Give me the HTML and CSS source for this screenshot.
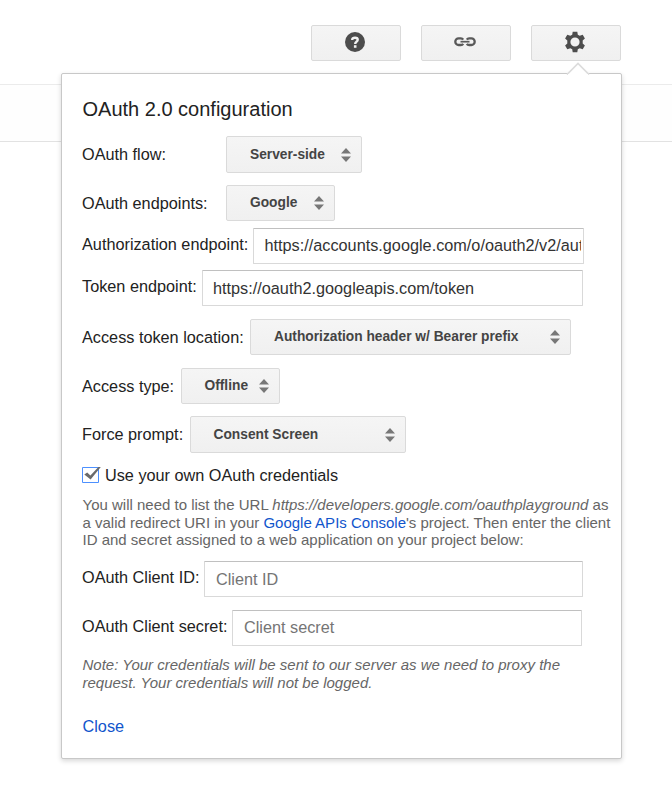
FILE: index.html
```html
<!DOCTYPE html>
<html lang="en">
<head>
<meta charset="utf-8">
<title>OAuth 2.0 configuration</title>
<link rel="stylesheet" href="styles.css">
</head>
<body>
<header class="toolbar">
  <button class="tool" aria-label="Help">
    <svg width="22" height="22" viewBox="0 0 22 22"><circle cx="11" cy="11" r="10" fill="#4d4d4d"/><path d="M8.2 8.9C8.2 7.4 9.2 6.7 11 6.7s2.7.8 2.7 2c0 1.8-2.5 2-2.5 4.3" fill="none" stroke="#f3f3f3" stroke-width="2.4"/><path d="M9.9 14.2h2.6v2.6H9.9z" fill="#f3f3f3"/></svg>
  </button>
  <button class="tool" aria-label="Link">
    <svg width="24" height="22" viewBox="0 0 24 22" fill="none" stroke="#5a5a5a" stroke-width="2.3"><path d="M10.2 8.6C9.6 7.7 8.8 7.4 7.9 7.4H5.6a3.3 3.3 0 0 0 0 6.6h2.3c.9 0 1.7-.3 2.3-1.2M13.8 8.6c.6-.9 1.4-1.2 2.3-1.2h2.3a3.3 3.3 0 0 1 0 6.6h-2.3c-.9 0-1.7-.3-2.3-1.2"/><path d="M7.5 10.7h9" stroke-width="1.7"/></svg>
  </button>
  <button class="tool" aria-label="Settings">
    <svg width="22" height="22" viewBox="0 0 22 22"><path fill="#4d4d4d" fill-rule="evenodd" d="M8.7.7h4.6l.5 3 1.9 1.1 3-1.1 2.2 3.9-2.2 2v2.8l2.2 2-2.2 3.9-3-1.1-1.9 1.1-.5 3H8.7l-.5-3-1.9-1.1-3 1.1-2.2-3.9 2.2-2V9.6l-2.2-2 2.2-3.9 3 1.1 1.9-1.1zM11 6.4a4.6 4.6 0 1 0 0 9.2 4.6 4.6 0 0 0 0-9.2z"/></svg>
  </button>
</header>
<div class="band"></div>

<section class="popup">
  <svg class="arrow" width="24" height="13" viewBox="0 0 24 13"><path d="M1 12.5 12 1.5l11 11" fill="#fff" stroke="#dcdcdc" stroke-width="1.7"/><path d="M2 12.5h20" stroke="#fff"/></svg>
  <h1 class="title">OAuth 2.0 configuration</h1>

  <div class="row row-flow">
    <span class="label label-wide">OAuth flow:</span>
    <button class="select select-flow"><span>Server-side</span><svg class="sort" width="10" height="14"><path d="M0 5.5 5 0l5 5.5zM0 8.5h10L5 14z"/></svg></button>
  </div>
  <div class="row row-endpoints">
    <span class="label label-wide">OAuth endpoints:</span>
    <button class="select select-google"><span>Google</span><svg class="sort" width="10" height="14"><path d="M0 5.5 5 0l5 5.5zM0 8.5h10L5 14z"/></svg></button>
  </div>
  <div class="row row-auth">
    <label class="label label-auth" for="auth">Authorization endpoint:</label>
    <input class="field field-auth" id="auth" value="https://accounts.google.com/o/oauth2/v2/auth">
  </div>
  <div class="row row-token">
    <label class="label label-token" for="token">Token endpoint:</label>
    <input class="field field-token" id="token" value="https://oauth2.googleapis.com/token">
  </div>
  <div class="row row-location">
    <span class="label label-location">Access token location:</span>
    <button class="select select-location"><span>Authorization header w/ Bearer prefix</span><svg class="sort" width="10" height="14"><path d="M0 5.5 5 0l5 5.5zM0 8.5h10L5 14z"/></svg></button>
  </div>
  <div class="row row-type">
    <span class="label label-type">Access type:</span>
    <button class="select select-type"><span>Offline</span><svg class="sort" width="10" height="14"><path d="M0 5.5 5 0l5 5.5zM0 8.5h10L5 14z"/></svg></button>
  </div>
  <div class="row row-prompt">
    <span class="label label-prompt">Force prompt:</span>
    <button class="select select-prompt"><span>Consent Screen</span><svg class="sort" width="10" height="14"><path d="M0 5.5 5 0l5 5.5zM0 8.5h10L5 14z"/></svg></button>
  </div>
  <div class="own">
    <svg class="check" width="20" height="19" viewBox="0 0 20 19"><path d="M.5 2.5h16v15H.5z" fill="#fff" stroke="#4d90fe"/><path d="M2.3 9.6 5.2 7.6l3.2 3L16.4 2h2.4L8.6 14.6z" fill="#6a6a6a"/></svg>
    <span>Use your own OAuth credentials</span>
  </div>
  <p class="help">You will need to list the URL <i>https://developers.google.com/oauthplayground</i> as<br>a valid redirect URI in your <a href="#">Google APIs Console</a>'s project. Then enter the client<br>ID and secret assigned to a web application on your project below:</p>
  <div class="row row-id">
    <label class="label label-id" for="cid">OAuth Client ID:</label>
    <input class="field field-id" id="cid" placeholder="Client ID">
  </div>
  <div class="row row-secret">
    <label class="label label-secret" for="secret">OAuth Client secret:</label>
    <input class="field field-secret" id="secret" placeholder="Client secret">
  </div>
  <p class="note">Note: Your credentials will be sent to our server as we need to proxy the<br>request. Your credentials will not be logged.</p>
  <a class="close" href="#">Close</a>
</section>
</body>
</html>
```
FILE: styles.css
```css
* { box-sizing: border-box; }
body {
  margin: 0;
  height: 797px;
  overflow: hidden;
  position: relative;
  background: #fff;
  color: #222;
  font-family: "Liberation Sans", Arial, sans-serif;
  font-size: 16.25px;
  line-height: 20px;
}
button, input { font-family: inherit; margin: 0; }
a { color: #15c; text-decoration: none; }

.toolbar {
  display: flex;
  justify-content: flex-end;
  gap: 20px;
  height: 84px;
  padding: 25px 51px 0 0;
}
.tool {
  display: flex;
  align-items: center;
  justify-content: center;
  width: 90px;
  height: 36px;
  padding: 0 2px 2px 0;
  border: 1px solid #dadada;
  border-radius: 2px;
  background: linear-gradient(#f5f5f5, #f0f0f0);
}
.band {
  height: 58px;
  border-top: 1px solid #ebebeb;
  border-bottom: 1px solid #e2e2e2;
  background: #fefefe;
}

.popup {
  position: absolute;
  top: 73px;
  left: 61px;
  width: 561px;
  height: 686px;
  padding: 23px 0 0 20px;
  border: 1px solid #c8c8c8;
  border-radius: 2px;
  background: #fff;
  box-shadow: 0 2px 5px rgba(0, 0, 0, .16);
}
.arrow {
  position: absolute;
  top: -12px;
  left: 504px;
}
.title {
  height: 39px;
  margin: 0;
  padding-left: .5px;
  font-size: 20px;
  font-weight: normal;
  line-height: 24px;
}

.row { display: flex; align-items: flex-start; }
.row-flow { height: 49px; }
.row-endpoints { height: 43px; }
.row-auth { height: 42px; }
.row-token { height: 49px; }
.row-location { height: 49px; }
.row-type { height: 48px; }
.row-prompt { height: 49px; }
.row-id { height: 49px; }
.row-secret { height: 46px; }

.label { flex: none; padding-top: 8px; white-space: nowrap; }
.label-wide { width: 144px; }
.label-auth { width: 171px; }
.label-token { width: 120px; }
.label-location { width: 168px; }
.label-type { width: 99px; }
.label-prompt { width: 108px; }
.label-id { width: 122px; }
.label-secret { width: 150px; }
.label-auth, .label-token, .label-id, .label-secret { padding-top: 6px; }

.select {
  display: flex;
  align-items: center;
  justify-content: space-between;
  height: 36px;
  padding: 0 10px 0 23px;
  border: 1px solid #dadada;
  border-radius: 2px;
  background: linear-gradient(#f5f5f5, #f0f0f0);
  color: #444;
  font-size: 13.75px;
  font-weight: bold;
  line-height: 16px;
  white-space: nowrap;
}
.select span { margin-bottom: 0; }
.select-flow { width: 136px; height: 37px; }
.select-google { width: 109px; }
.select-location { width: 321px; }
.select-type { width: 99px; padding-left: 22.5px; }
.select-prompt { width: 216px; height: 37px; padding-left: 22.5px; }
.sort { flex: none; fill: #777; }

.field {
  height: 36px;
  padding: 1px 2px 0 10px;
  border: 1px solid #d9d9d9;
  border-top-color: #c0c0c0;
  border-radius: 1px;
  background: #fff;
  color: #333;
  font-size: 16.25px;
  outline: none;
}
.field::placeholder { color: #757575; opacity: 1; }
.field-auth { width: 331px; padding: 0 2px 1px 10.5px; }
.field-token { width: 381px; }
.field-id { width: 379px; padding-left: 11px; }
.field-secret { width: 350px; padding: 0 2px 1px 11px; }

.own { display: flex; height: 31px; }
.own span { margin-left: 3px; }
.check { flex: none; }
.help, .note {
  margin: 0;
  padding-left: .5px;
  color: #666;
  font-size: 15px;
  line-height: 17.5px;
  white-space: nowrap;
}
.help { height: 65px; }
.note { height: 60px; font-style: italic; line-height: 18px; }
.close { display: inline-block; padding-left: .5px; }
```
